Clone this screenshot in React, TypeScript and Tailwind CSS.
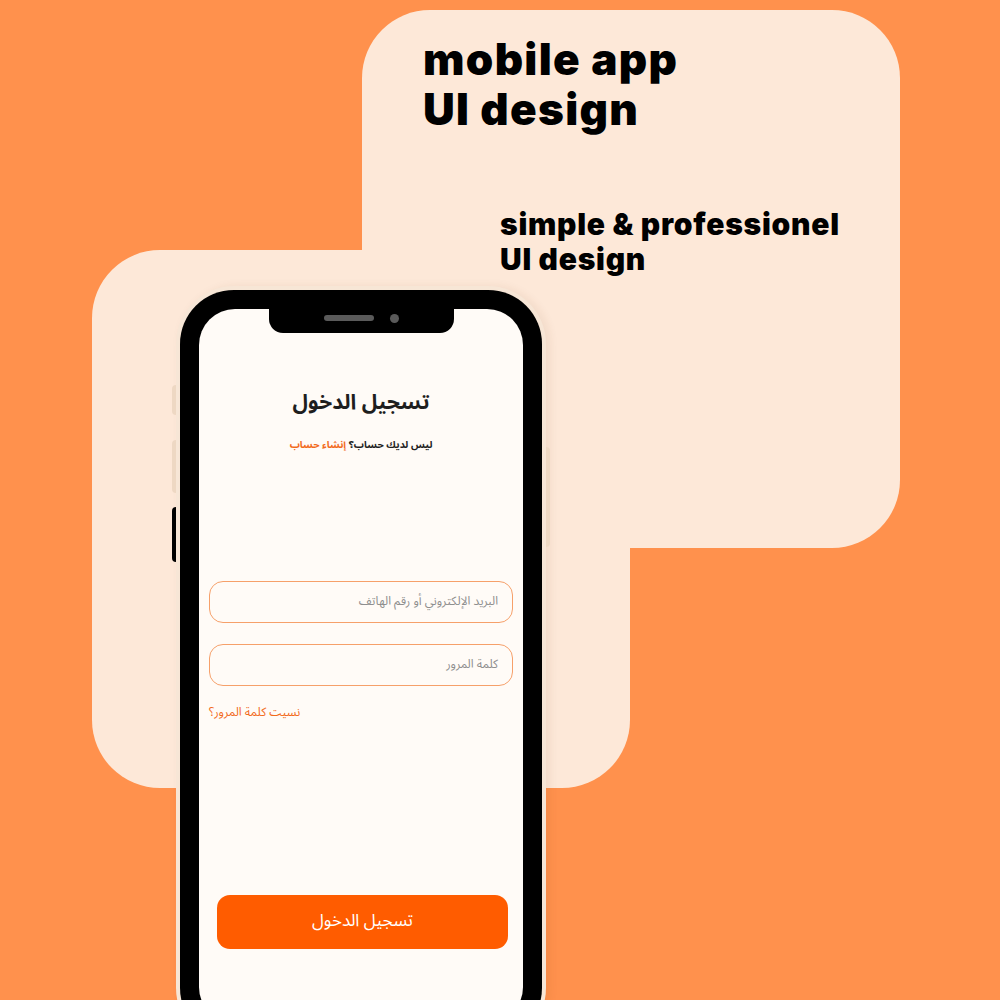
const arabic = { fontFamily: '"Noto Sans Arabic", "DejaVu Sans", sans-serif' };
const latin = { fontFamily: 'Inter, "Noto Sans", sans-serif' };

export default function App() {
  return (
    <div className="relative h-[1000px] w-[1000px] overflow-hidden bg-[#FF914D]">
      {/* Back cards */}
      <div className="absolute left-[92px] top-[250px] h-[538px] w-[538px] rounded-[68px] bg-[#FDE8D8]" />
      <div
        className="absolute left-[362px] top-[10px] h-[538px] w-[538px] rounded-[68px] bg-[#FDE8D8] pl-[61px] pt-[24px]"
        style={latin}
      >
        <h1 className="text-[44px] font-black leading-[50px] tracking-[0.03em] text-black">
          mobile app
          <br />
          UI design
        </h1>
        <p className="ml-[77px] mt-[73px] text-[30px] font-black leading-[35px] tracking-[0.025em] text-black">
          simple &amp; professionel
          <br />
          UI design
        </p>
      </div>

      {/* Phone */}
      <Phone />
    </div>
  );
}

function Phone() {
  return (
    <div className="absolute left-[176px] top-[286px] h-[760px] w-[370px] rounded-[58px] bg-[#F7E6D6] p-[4px] shadow-[4px_0_8px_rgba(120,70,30,0.08)]">
      {/* side buttons */}
      <div className="absolute left-[-4px] top-[99px] h-[30px] w-[4px] rounded-l-sm bg-[#EED8C3]" />
      <div className="absolute left-[-4px] top-[154px] h-[53px] w-[4px] rounded-l-sm bg-[#EED8C3]" />
      <div className="absolute left-[-4px] top-[221px] h-[55px] w-[4px] rounded-l-sm bg-black" />
      <div className="absolute right-[-4px] top-[161px] h-[100px] w-[4px] rounded-r-sm bg-[#EED8C3]" />

      <div className="h-full rounded-[54px] bg-black p-[19px]">
        <div className="relative flex h-full flex-col overflow-hidden rounded-[36px] bg-[#FFFBF7]" dir="rtl" style={arabic}>
          {/* notch */}
          <div className="absolute left-[70px] top-0 flex h-[24px] w-[185px] items-center justify-center gap-[16px] rounded-b-[14px] bg-black pb-[6px]" dir="ltr">
            <div className="h-[6px] w-[50px] rounded-full bg-[#5a5a5a]" />
            <div className="h-[9px] w-[9px] rounded-full bg-[#5a5a5a]" />
          </div>

          <h2 className="pt-[78px] text-center text-[21px] font-bold leading-[30px] text-[#1e1e1e]">تسجيل الدخول</h2>
          <p className="mt-[20px] text-center text-[10px] font-bold leading-[16px] text-[#1e1e1e]">
            ليس لديك حساب؟ <span className="text-[#F26A1B]">إنشاء حساب</span>
          </p>

          <div className="mt-[128px] flex flex-col gap-[21px] px-[10px]">
            <Field placeholder="البريد الإلكتروني أو رقم الهاتف" />
            <Field placeholder="كلمة المرور" />
          </div>
          <p className="mt-[19px] px-[10px] text-left text-[12px] leading-[16px] text-[#F26A1B]">نسيت كلمة المرور؟</p>

          <button className="ml-[18px] mr-[15px] mt-[174px] h-[54px] rounded-[13px] bg-[#FF5C00] text-[17px] text-white">
            تسجيل الدخول
          </button>
        </div>
      </div>
    </div>
  );
}

function Field({ placeholder }: { placeholder: string }) {
  return (
    <div className="flex h-[42px] items-center rounded-[14px] border-[1.5px] border-[#F6A06A] px-[14px] text-[12px] text-[#8e8e8e]">
      {placeholder}
    </div>
  );
}
